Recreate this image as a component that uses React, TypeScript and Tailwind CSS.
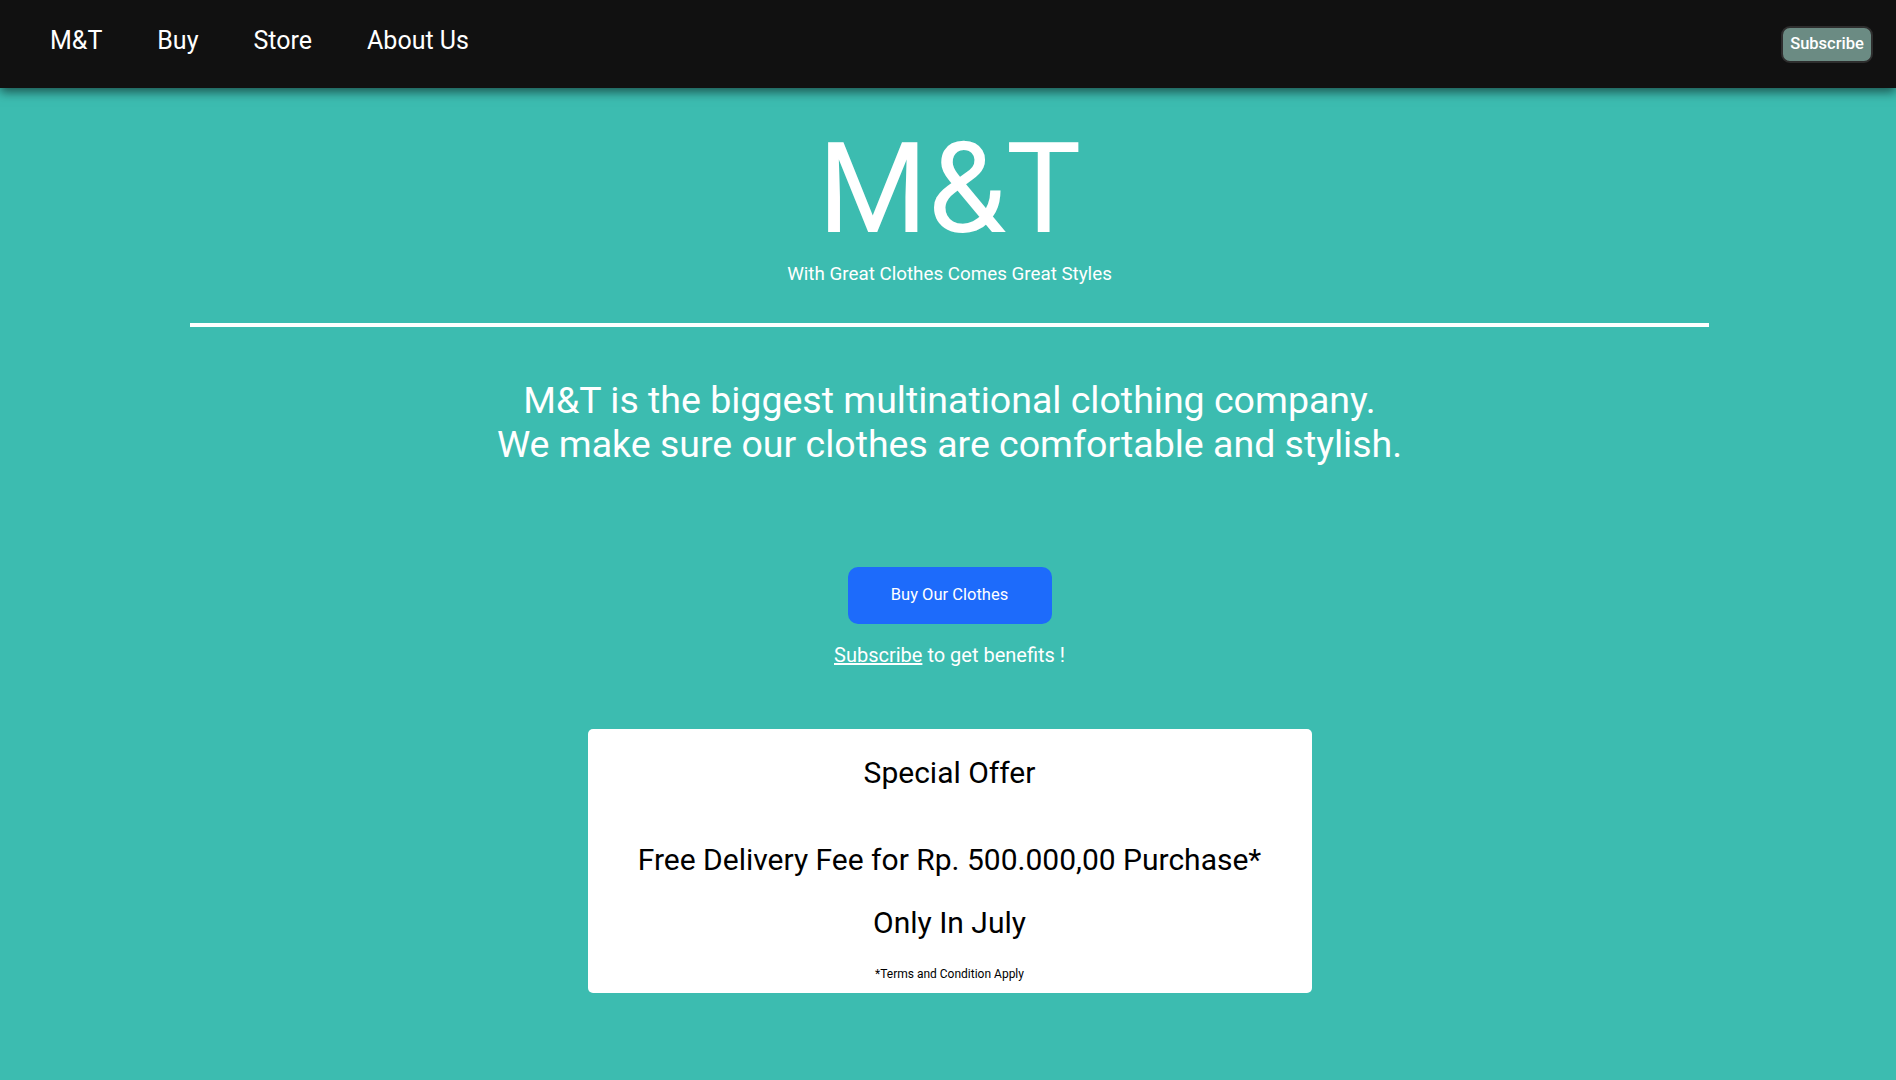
const navLinks = ["M&T", "Buy", "Store", "About Us"];

function Navbar() {
  return (
    <nav className="relative z-10 flex h-[88px] items-start justify-between bg-[#111111] shadow-[0_4px_10px_rgba(0,0,0,0.55)]">
      <ul className="flex gap-[55px] pl-[50px] pt-[26px]">
        {navLinks.map((link) => (
          <li key={link}>
            <a href="#" className="text-[25px] leading-[30px] text-white">
              {link}
            </a>
          </li>
        ))}
      </ul>
      <button className="mr-[23px] mt-[26px] h-[37px] w-[92px] rounded-[9px] border-2 border-[#2e2e2e] bg-[#6b8b83] text-[16.5px] font-medium leading-none text-white">
        Subscribe
      </button>
    </nav>
  );
}

function OfferCard() {
  return (
    <div className="mt-[62px] flex w-[724px] flex-col items-center rounded-[5px] bg-white pb-[12px] pt-[26px] text-black">
      <h2 className="text-[30px] leading-[36px]">Special Offer</h2>
      <p className="mt-[51px] text-[30px] leading-[36px]">
        Free Delivery Fee for Rp. 500.000,00 Purchase*
      </p>
      <p className="mt-[27px] text-[30px] leading-[36px]">Only In July</p>
      <p className="mt-[26px] text-[12px] leading-[14px]">*Terms and Condition Apply</p>
    </div>
  );
}

export default function App() {
  return (
    <div className="min-h-[1080px] bg-[#3cbcb0] font-['Roboto',sans-serif] text-white">
      <Navbar />
      <main className="flex flex-col items-center pl-[3px] text-center">
        <h1 className="mt-[38px] text-[126px] leading-[126px]">M&amp;T</h1>
        <p className="mt-[11px] text-[18.8px] leading-[22px]">
          With Great Clothes Comes Great Styles
        </p>
        <hr className="mt-[38px] h-[4px] w-[1519px] border-0 bg-white" />
        <p className="mt-[51px] text-[37.5px] leading-[44px]">
          M&amp;T is the biggest multinational clothing company.
          <br />
          We make sure our clothes are comfortable and stylish.
        </p>
        <button className="mt-[101px] h-[57px] w-[204px] rounded-[10px] bg-[#1d6bfb] text-[16.5px] text-white">
          Buy Our Clothes
        </button>
        <p className="mt-[19px] text-[20px] leading-[24px]">
          <a href="#" className="underline">
            Subscribe
          </a>{" "}
          to get benefits !
        </p>
        <OfferCard />
      </main>
    </div>
  );
}
